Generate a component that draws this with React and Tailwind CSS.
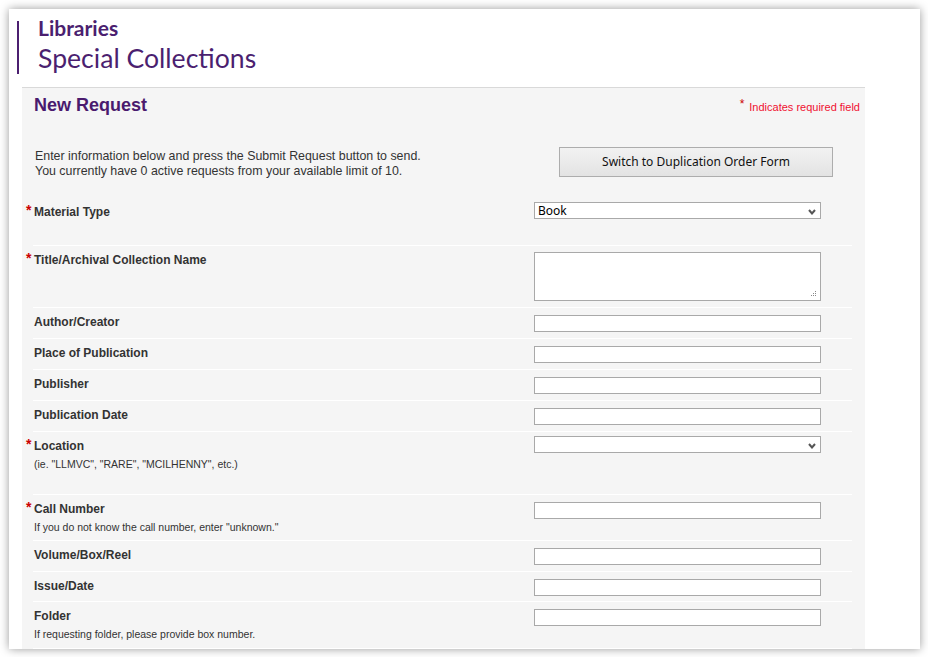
import React from "react";

const rows = [
  { label: "Material Type", req: true, type: "select", value: "Book", h: "h-[48px]" },
  { label: "Title/Archival Collection Name", req: true, type: "textarea", h: "h-[62px]" },
  { label: "Author/Creator", h: "h-[31px]" },
  { label: "Place of Publication", h: "h-[31px]" },
  { label: "Publisher", h: "h-[31px]" },
  { label: "Publication Date", h: "h-[31px]" },
  { label: "Location", req: true, type: "select", value: "", help: '(ie. "LLMVC", "RARE", "MCILHENNY", etc.)', h: "h-[63px]" },
  { label: "Call Number", req: true, help: 'If you do not know the call number, enter "unknown."', h: "h-[46px]" },
  { label: "Volume/Box/Reel", h: "h-[31px]" },
  { label: "Issue/Date", h: "h-[30px]" },
  { label: "Folder", help: "If requesting folder, please provide box number.", h: "h-[47px]" },
];

function Chevron() {
  return (
    <svg className="absolute right-[4px] top-[6px]" width="8" height="6" viewBox="0 0 8 6">
      <polyline points="1,1 4,4.5 7,1" fill="none" stroke="#555" strokeWidth="2" />
    </svg>
  );
}

function Grip() {
  return (
    <svg className="absolute right-[3px] bottom-[3px]" width="6" height="6" viewBox="0 0 6 6">
      <rect x="4" y="0" width="1" height="1" fill="#888" />
      <rect x="2" y="2" width="1" height="1" fill="#888" />
      <rect x="4" y="2" width="1" height="1" fill="#888" />
      <rect x="0" y="4" width="1" height="1" fill="#888" />
      <rect x="2" y="4" width="1" height="1" fill="#888" />
      <rect x="4" y="4" width="1" height="1" fill="#888" />
    </svg>
  );
}

function Field({ row }) {
  if (row.type === "select") {
    return (
      <div className="pt-[4px]">
        <div className="relative w-[287px] h-[17px] border border-[#a9a9a9] bg-white">
          <span className="block pl-[3px] text-[12px] leading-[15px] text-black font-['Noto_Sans',sans-serif]">
            {row.value}
          </span>
          <Chevron />
        </div>
      </div>
    );
  }
  if (row.type === "textarea") {
    return (
      <div className="pt-[6px]">
        <div className="relative w-[287px] h-[49px] border border-[#a9a9a9] bg-white">
          <Grip />
        </div>
      </div>
    );
  }
  return (
    <div className="pt-[7px]">
      <input className="block w-[287px] h-[17px] border border-[#a9a9a9] bg-white outline-none" />
    </div>
  );
}

export default function App() {
  return (
    <div className="min-h-[657px] bg-white pt-[9px] pl-[9px]">
      <div className="w-[911px] h-[640px] bg-white shadow-[0_0_9px_rgba(0,0,0,0.4)] overflow-hidden">
        {/* Header */}
        <div className="flex pl-[8px] pt-[9px]">
          <div className="mt-[3px] w-[2px] h-[53px] bg-[#4b1f70]" />
          <div className="pl-[19px] font-['Lato',sans-serif] text-[#4b1f70]">
            <div className="text-[21px] leading-[20px] font-bold">Libraries</div>
            <div className="mt-[7px] text-[26.6px] leading-[26px]">Special Collections</div>
          </div>
        </div>

        {/* Panel */}
        <div className="mt-[13px] ml-[13px] w-[843px] bg-[#f5f5f5] border-t border-[#d9d9d9] font-['Liberation_Sans',Arial,sans-serif]">
          <div className="flex justify-between items-start pl-[12px] pr-[5px] pt-[6px]">
            <div className="text-[18px] leading-[22px] font-bold text-[#4a1a6e]">New Request</div>
            <div className="mt-[6px] text-[11px] leading-[14px] text-[#f01030]">
              <span className="relative top-[-3px] mr-[5px] text-[12px] text-[#cc0000]">*</span>
              Indicates required field
            </div>
          </div>

          <div className="mt-[31px] ml-[13px] flex items-start h-[30px]">
            <div className="w-[524px] pt-[2px] text-[12.4px] leading-[15px] text-[#333]">
              <div>Enter information below and press the Submit Request button to send.</div>
              <div>You currently have 0 active requests from your available limit of 10.</div>
            </div>
            <button className="w-[274px] h-[30px] border border-[#adadad] bg-gradient-to-b from-[#f2f2f2] to-[#e3e3e3] text-[12px] text-[#111] font-['Noto_Sans',sans-serif]">
              Switch to Duplication Order Form
            </button>
          </div>

          <div className="mt-[21px] ml-[11px] w-[819px]">
            {rows.map((row) => (
              <div key={row.label} className={`flex border-b border-white ${row.h}`}>
                <div className="w-[501px] pl-[1px] pt-[7px] text-[#333]">
                  <div className="relative text-[12px] leading-[15px] font-bold">
                    {row.req && (
                      <span className="absolute left-[-8px] top-[-2px] text-[14px] leading-[14px] font-bold text-[#cc0000]">
                        *
                      </span>
                    )}
                    {row.label}
                  </div>
                  {row.help && (
                    <div className="mt-[3px] text-[10.5px] leading-[14px]">{row.help}</div>
                  )}
                </div>
                <Field row={row} />
              </div>
            ))}
          </div>
        </div>
      </div>
    </div>
  );
}
